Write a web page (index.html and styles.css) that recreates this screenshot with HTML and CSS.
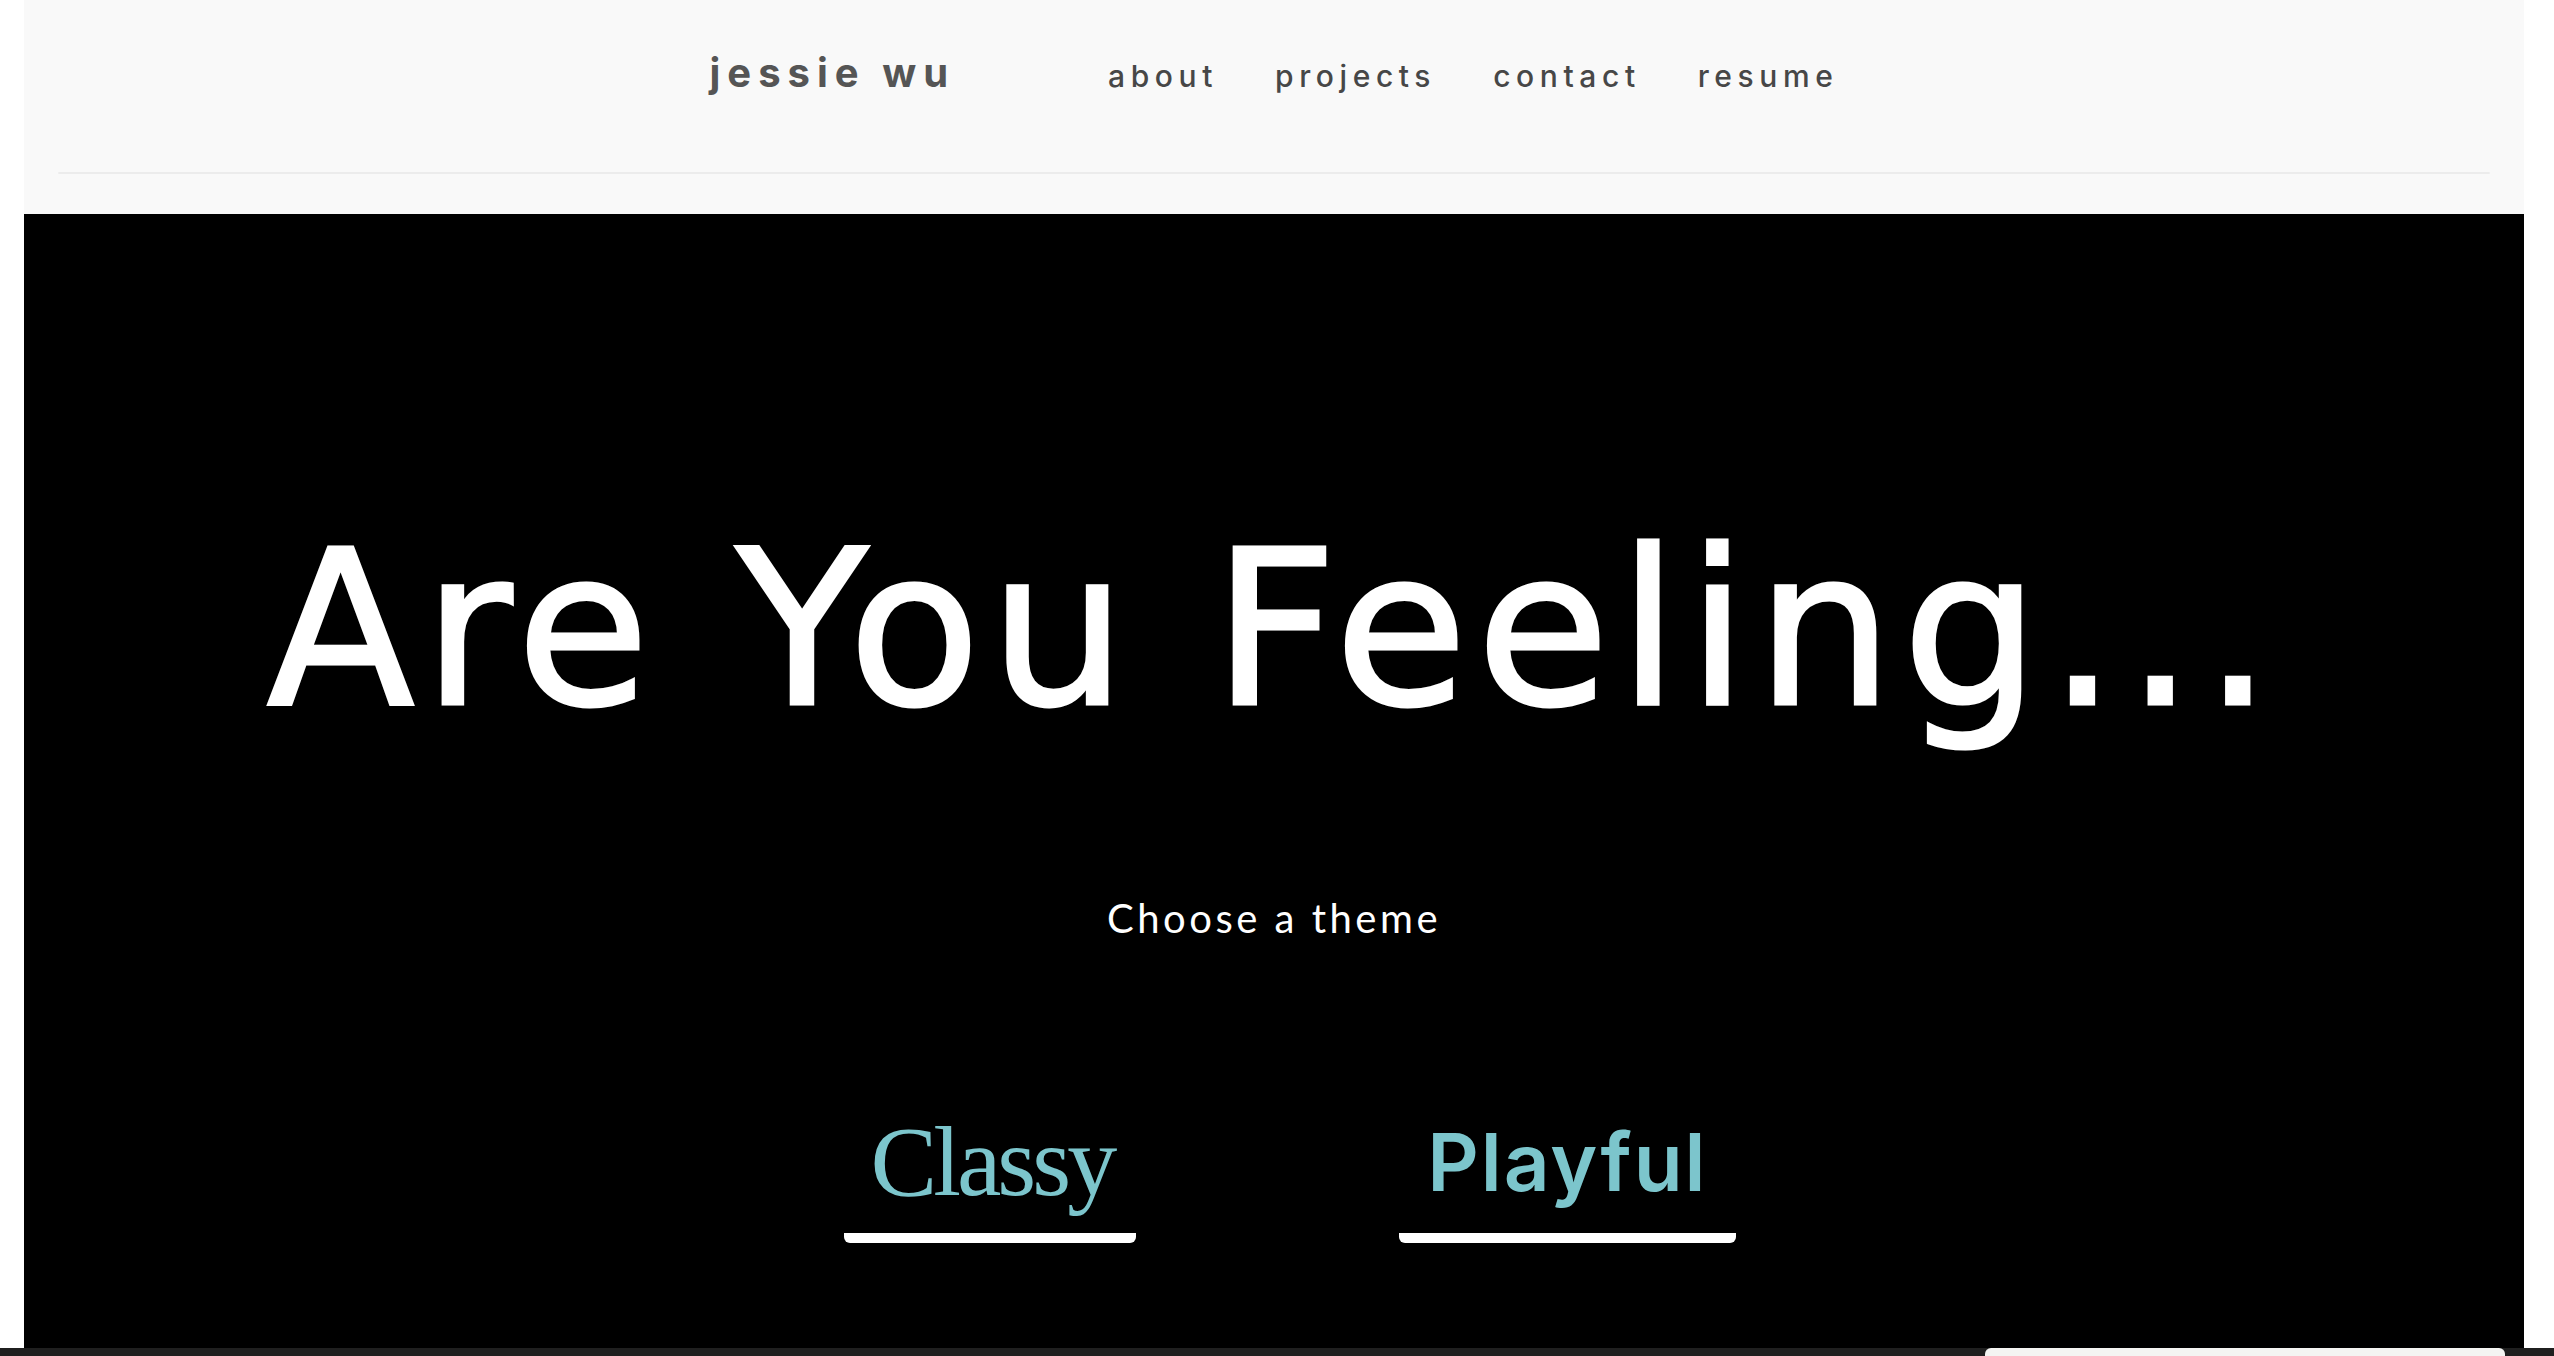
FILE: index.html
```html
<!DOCTYPE html>
<html lang="en">
<head>
<meta charset="utf-8">
<title>jessie wu</title>
<link rel="stylesheet" href="styles.css">
</head>
<body>
<div class="page">
  <header class="header">
    <div class="nav-row">
      <a class="logo" href="#">jessie wu</a>
      <nav class="nav">
        <a href="#">about</a>
        <a href="#">projects</a>
        <a href="#">contact</a>
        <a href="#">resume</a>
      </nav>
    </div>
    <div class="rule"></div>
  </header>
  <main class="hero">
    <h1 class="title">Are You Feeling...</h1>
    <p class="subtitle">Choose a theme</p>
    <div class="themes">
      <a class="theme theme-classy" href="#">Classy</a>
      <a class="theme theme-playful" href="#">Playful</a>
    </div>
  </main>
</div>
<div class="dock"><span class="dock-tab"></span></div>
</body>
</html>
```

FILE: styles.css
```css
html, body {
  margin: 0;
  padding: 0;
  background: #ffffff;
  overflow: hidden;
}

.page {
  margin-left: 24px;
  width: 2500px;
}

.header {
  background: #f9f9f9;
  height: 214px;
  padding: 0 34px;
  box-sizing: border-box;
  display: flex;
  flex-direction: column;
}

.nav-row {
  height: 172px;
  display: flex;
  justify-content: center;
  align-items: baseline;
  padding-top: 48px;
  box-sizing: border-box;
  gap: 153px;
}

.logo {
  font-family: "Inter", "DejaVu Sans", sans-serif;
  font-weight: 700;
  font-size: 40px;
  letter-spacing: 7px;
  color: #555555;
  text-decoration: none;
}

.nav {
  display: flex;
  gap: 57px;
}

.nav a {
  font-family: "Inter", "DejaVu Sans", sans-serif;
  font-weight: 500;
  font-size: 30px;
  letter-spacing: 5.6px;
  color: #474747;
  text-decoration: none;
}

.rule {
  height: 2px;
  background: #ececec;
  border-radius: 1px;
}

.hero {
  background: #000000;
  height: 1142px;
  display: flex;
  flex-direction: column;
  align-items: center;
}

.title {
  margin: 312px 0 0;
  font-family: "DejaVu Sans", "Inter", sans-serif;
  font-weight: 400;
  font-size: 216px;
  line-height: 208px;
  color: #ffffff;
  -webkit-text-stroke: 3px #ffffff;
  letter-spacing: 9px;
  white-space: nowrap;
}

.subtitle {
  margin: 160px 0 0;
  font-family: "Lato", sans-serif;
  font-weight: 400;
  font-size: 40px;
  line-height: 48px;
  letter-spacing: 3.5px;
  color: #ffffff;
}

.themes {
  display: flex;
  align-items: flex-end;
  gap: 263px;
  margin-top: 170px;
  padding-left: 32px;
}

.theme {
  text-decoration: none;
  color: #7cc5cc;
  line-height: 1;
  padding: 0 26px;
  border-bottom: 10px solid #ffffff;
  border-radius: 0 0 6px 6px;
}

.theme-classy {
  font-family: "Liberation Serif", "DejaVu Serif", serif;
  font-size: 100px;
  letter-spacing: -4px;
  padding-bottom: 21px;
  padding-right: 23px;
}

.theme-playful {
  font-family: "Inter", "DejaVu Sans", sans-serif;
  font-weight: 600;
  font-size: 80px;
  letter-spacing: 2px;
  padding-bottom: 31px;
  padding-left: 28px;
  padding-right: 28px;
}

.dock {
  position: fixed;
  left: 0;
  right: 0;
  bottom: 0;
  height: 8px;
  background: #1f1f1f;
}

.dock-tab {
  position: absolute;
  left: 1985px;
  width: 520px;
  top: 0;
  bottom: 0;
  background: #f4f4f2;
  border-radius: 6px 6px 0 0;
}
```
